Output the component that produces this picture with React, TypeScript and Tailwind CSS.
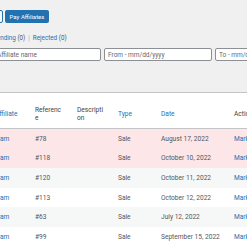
import React from "react";

const rows = [
  { aff: "Adam", ref: "#78", type: "Sale", date: "August 17, 2022", bg: "bg-[#fce6e8]" },
  { aff: "Adam", ref: "#118", type: "Sale", date: "October 10, 2022", bg: "bg-[#fce6e8]" },
  { aff: "Adam", ref: "#120", type: "Sale", date: "October 11, 2022", bg: "bg-[#f6f7f7]" },
  { aff: "Adam", ref: "#113", type: "Sale", date: "October 12, 2022", bg: "bg-white" },
  { aff: "Adam", ref: "#63", type: "Sale", date: "July 12, 2022", bg: "bg-[#f6f7f7]" },
  { aff: "Adam", ref: "#99", type: "Sale", date: "September 15, 2022", bg: "bg-white" },
  { aff: "Adam", ref: "#101", type: "Sale", date: "September 16, 2022", bg: "bg-[#f6f7f7]" },
];

const cols = "grid grid-cols-[40px_42px_41px_43px_73px_120px]";

export default function App() {
  return (
    <div
      className="w-[247px] h-[247px] overflow-hidden bg-[#f0f0f1] text-[6.6px] leading-[8px] text-[#50575e]"
      style={{ fontFamily: "Roboto, 'Liberation Sans', Arial, sans-serif" }}
    >
      <div className="w-[600px]">
        {/* buttons */}
        <div className="flex gap-[2px] mt-[10px] ml-[-39px] h-[13px]">
          <button className="w-[42px] h-[13px] border border-[#2271b1] bg-[#f6f7f7] text-[#2271b1] rounded-[2px] text-[6px]">
            Export
          </button>
          <button className="w-[44px] h-[13px] bg-[#2271b1] text-white rounded-[2px] text-[6px] leading-[13px]">
            Pay Affiliates
          </button>
        </div>

        {/* status links */}
        <div className="mt-[11px] ml-[-7px] h-[8px] whitespace-nowrap text-[6.3px]">
          <span className="text-[#2271b1]">Pending</span> <span className="text-[#50575e]">(0)</span>
          <span className="text-[#a7aaad] mx-[3px]">|</span>
          <span className="text-[#2271b1]">Rejected</span> <span className="text-[#50575e]">(0)</span>
        </div>

        {/* filters */}
        <div className="flex gap-[3px] mt-[6px] ml-[-7px]">
          <input
            className="w-[108px] h-[13px] bg-white border border-[#8c8f94] rounded-[2px] pl-[3px] text-[6.5px] placeholder:text-[#646970] outline-none"
            placeholder="Affiliate name"
          />
          <input
            className="w-[108px] h-[13px] bg-white border border-[#8c8f94] rounded-[2px] pl-[3px] text-[6.5px] placeholder:text-[#646970] outline-none"
            placeholder="From - mm/dd/yyyy"
          />
          <input
            className="w-[108px] h-[13px] bg-white border border-[#8c8f94] rounded-[2px] pl-[3px] text-[6.5px] placeholder:text-[#646970] outline-none"
            placeholder="To - mm/dd/yyyy"
          />
        </div>

        {/* table */}
        <div className="mt-[31px] ml-[-13px] border-t border-[#c3c4c7] bg-white">
          <div className={`${cols} h-[36px] border-b border-[#c3c4c7] pt-[6px]`}>
            <div className="flex items-center pl-[8px] text-[#2271b1]">Affiliate</div>
            <div className="flex items-center pl-[8px] pr-[5px] text-[#3c434a]">
              <span>Referenc<wbr />e</span>
            </div>
            <div className="flex items-center pl-[8px] pr-[6px] text-[#3c434a]">
              <span>Descripti<wbr />on</span>
            </div>
            <div className="flex items-center pl-[8px] text-[#2271b1]">Type</div>
            <div className="flex items-center pl-[8px] text-[#2271b1]">Date</div>
            <div className="flex items-center pl-[8px] text-[#3c434a]">Actions</div>
          </div>
          {rows.map((r, i) => (
            <div key={i} className={`${cols} h-[19.6px] ${r.bg}`}>
              <div className="flex items-center pl-[5px] text-[#2271b1] whitespace-nowrap">{r.aff}</div>
              <div className="flex items-center pl-[8px]">{r.ref}</div>
              <div className="flex items-center pl-[8px]"></div>
              <div className="flex items-center pl-[8px]">{r.type}</div>
              <div className="flex items-center pl-[8px] whitespace-nowrap">{r.date}</div>
              <div className="flex items-center pl-[8px] text-[#2271b1] whitespace-nowrap">Mark as Paid</div>
            </div>
          ))}
        </div>
      </div>
    </div>
  );
}
